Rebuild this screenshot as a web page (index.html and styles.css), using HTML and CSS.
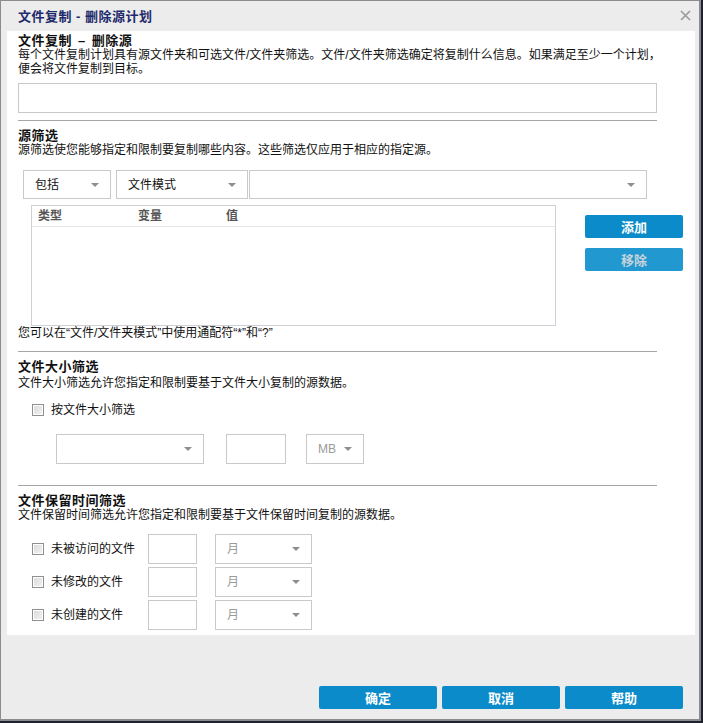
FILE: index.html
```html
<!DOCTYPE html>
<html lang="zh-CN">
<head>
<meta charset="utf-8">
<title>文件复制 - 删除源计划</title>
<link rel="stylesheet" href="styles.css">
</head>
<body>
<div class="dialog">
  <div class="titlebar">
    <span class="title">文件复制 - 删除源计划</span>
    <svg class="close" width="11" height="11" viewBox="0 0 11 11"><path d="M1 1 L10 10 M10 1 L1 10" stroke="#9a9a9a" stroke-width="1.6" fill="none"/></svg>
  </div>
  <div class="panel">
    <div class="h h-first">文件复制<span class="dash">–</span>删除源</div>
    <div class="desc">每个文件复制计划具有源文件夹和可选文件/文件夹筛选。文件/文件夹筛选确定将复制什么信息。如果满足至少一个计划，<br>便会将文件复制到目标。</div>
    <div class="textbox wide"></div>
    <div class="sep"></div>

    <div class="h">源筛选</div>
    <div class="desc">源筛选使您能够指定和限制要复制哪些内容。这些筛选仅应用于相应的指定源。</div>
    <div class="selrow">
      <div class="select s-incl"><span>包括</span><i class="arrow"></i></div>
      <div class="select s-mode"><span>文件模式</span><i class="arrow"></i></div>
      <div class="select s-val"><span></span><i class="arrow"></i></div>
    </div>
    <div class="tablerow">
      <div class="table">
        <div class="thead">
          <span class="c1">类型</span><span class="c2">变量</span><span class="c3">值</span>
        </div>
      </div>
      <div class="sidebtns">
        <div class="btn">添加</div>
        <div class="btn btn-off">移除</div>
      </div>
    </div>
    <div class="hint">您可以在“文件/文件夹模式”中使用通配符“*”和“?”</div>
    <div class="sep sep2"></div>

    <div class="h h2">文件大小筛选</div>
    <div class="desc desc2">文件大小筛选允许您指定和限制要基于文件大小复制的源数据。</div>
    <div class="chkrow"><span class="chk"></span><span class="lbl">按文件大小筛选</span></div>
    <div class="sizerow">
      <div class="select s-size"><span></span><i class="arrow"></i></div>
      <div class="textbox t-size"></div>
      <div class="select s-unit dis"><span>MB</span><i class="arrow"></i></div>
    </div>
    <div class="sep sep3"></div>

    <div class="h h3">文件保留时间筛选</div>
    <div class="desc">文件保留时间筛选允许您指定和限制要基于文件保留时间复制的源数据。</div>
    <div class="agerows">
      <div class="agerow">
        <div class="agelabel"><span class="chk"></span><span class="lbl">未被访问的文件</span></div>
        <div class="textbox t-age"></div>
        <div class="select s-age dis"><span>月</span><i class="arrow"></i></div>
      </div>
      <div class="agerow">
        <div class="agelabel"><span class="chk"></span><span class="lbl">未修改的文件</span></div>
        <div class="textbox t-age"></div>
        <div class="select s-age dis"><span>月</span><i class="arrow"></i></div>
      </div>
      <div class="agerow">
        <div class="agelabel"><span class="chk"></span><span class="lbl">未创建的文件</span></div>
        <div class="textbox t-age"></div>
        <div class="select s-age dis"><span>月</span><i class="arrow"></i></div>
      </div>
    </div>
  </div>
  <div class="footer">
    <div class="btn fbtn">确定</div>
    <div class="btn fbtn">取消</div>
    <div class="btn fbtn">帮助</div>
  </div>
</div>
</body>
</html>
```

FILE: styles.css
```css
html, body {
  margin: 0;
  padding: 0;
}
body {
  background: #1e2030;
  width: 703px;
  height: 723px;
  font-family: "Liberation Sans", "Noto Sans CJK SC", sans-serif;
  font-size: 12px;
  color: #111;
}
.dialog {
  box-sizing: border-box;
  width: 701px;
  height: 721px;
  border: 1px solid #8c8c8c;
  border-right-width: 2px;
  border-bottom-width: 2px;
  background: #ececec;
  display: flex;
  flex-direction: column;
}
.titlebar {
  height: 30px;
  display: flex;
  align-items: center;
  justify-content: space-between;
  padding: 0 8px 0 17px;
}
.title {
  font-weight: bold;
  font-size: 13px;
  color: #1d2a6b;
  line-height: 15px;
  letter-spacing: 0.5px;
}
.close {
  display: block;
  margin-top: -2px;
}
.panel {
  background: #fff;
  margin: 0 4px 0 6px;
  height: 604px;
  box-sizing: border-box;
  padding: 0 10px 0 11px;
  display: flex;
  flex-direction: column;
  align-items: flex-start;
}
.h {
  font-weight: bold;
  font-size: 13px;
  line-height: 15px;
  margin-top: 7px;
  color: #111;
  letter-spacing: 0.5px;
}
.dash {
  padding: 0 6px;
}
.h-first { margin-top: 2px; }
.h2 { margin-top: 7px; }
.h3 { margin-top: 7px; }
.desc {
  line-height: 14px;
  white-space: nowrap;
}
.desc2 { margin-top: 2px; }
.textbox {
  box-sizing: border-box;
  border: 1px solid #c9c9c9;
  background: #fff;
  height: 30px;
  flex: none;
}
.wide {
  margin-top: 7px;
  width: 639px;
}
.sep {
  height: 1px;
  background: #a6a6a6;
  margin-top: 7px;
  width: 639px;
  flex: none;
}
.sep2 { margin-top: 11px; }
.sep3 { margin-top: 21px; }

.select {
  box-sizing: border-box;
  height: 29px;
  border: 1px solid #c9c9c9;
  background: #fff;
  display: flex;
  align-items: center;
  justify-content: space-between;
  padding: 0 11px 0 11px;
  line-height: 14px;
  flex: none;
}
.select.dis span { color: #9a9a9a; }
.arrow {
  width: 0;
  height: 0;
  border-left: 4px solid transparent;
  border-right: 4px solid transparent;
  border-top: 4px solid #8e8e8e;
}
.selrow {
  display: flex;
  margin-top: 13px;
  margin-left: 5px;
}
.s-incl { width: 88px; margin-right: 5px; }
.s-mode { width: 132px; margin-right: 1px; }
.s-val { width: 398px; }

.tablerow {
  display: flex;
  margin-top: 6px;
  margin-left: 13px;
}
.table {
  box-sizing: border-box;
  width: 525px;
  height: 121px;
  border: 1px solid #cfcfd6;
  flex: none;
}
.thead {
  height: 20px;
  border-bottom: 1px solid #e6e6e6;
  display: flex;
  align-items: center;
  font-weight: bold;
  color: #555;
  line-height: 14px;
}
.c1 { width: 100px; padding-left: 6px; }
.c2 { width: 88px; }
.sidebtns {
  margin-left: 29px;
  margin-top: 10px;
  display: flex;
  flex-direction: column;
  gap: 10px;
  flex: none;
}
.btn {
  box-sizing: border-box;
  width: 98px;
  height: 23px;
  border-radius: 2px;
  background: #0b8bc9;
  color: #fff;
  font-weight: bold;
  font-size: 13px;
  display: flex;
  align-items: center;
  justify-content: center;
  flex: none;
}
.btn-off {
  background: #2298d0;
  color: #c5d3da;
}
.hint {
  line-height: 14px;
  margin-top: 0;
}

.chkrow {
  display: flex;
  align-items: center;
  margin-top: 14px;
  padding-left: 14px;
  height: 12px;
}
.chk {
  box-sizing: border-box;
  width: 12px;
  height: 12px;
  border: 1px solid #8f8f8f;
  background: linear-gradient(135deg, #d9d9d9, #f4f4f4);
  box-shadow: inset 0 0 0 1px #fff;
  flex: none;
}
.lbl {
  margin-left: 7px;
  line-height: 14px;
}
.sizerow {
  display: flex;
  margin-top: 18px;
  padding-left: 38px;
}
.sizerow .select, .sizerow .textbox { height: 30px; }
.s-size { width: 148px; }
.t-size { width: 60px; margin-left: 22px; }
.s-unit { width: 58px; margin-left: 20px; padding-left: 11px; }

.agerows {
  margin-top: 12px;
  display: flex;
  flex-direction: column;
  gap: 3px;
}
.agerow {
  display: flex;
  align-items: center;
  height: 30px;
}
.agelabel {
  display: flex;
  align-items: center;
  width: 130px;
  box-sizing: border-box;
  padding-left: 14px;
}
.t-age { width: 49px; height: 30px; }
.s-age { width: 97px; height: 30px; margin-left: 18px; }

.footer {
  display: flex;
  justify-content: flex-end;
  gap: 5px;
  margin-top: 51px;
  padding-right: 16px;
}
.fbtn { width: 118px; height: 23px; }
```
